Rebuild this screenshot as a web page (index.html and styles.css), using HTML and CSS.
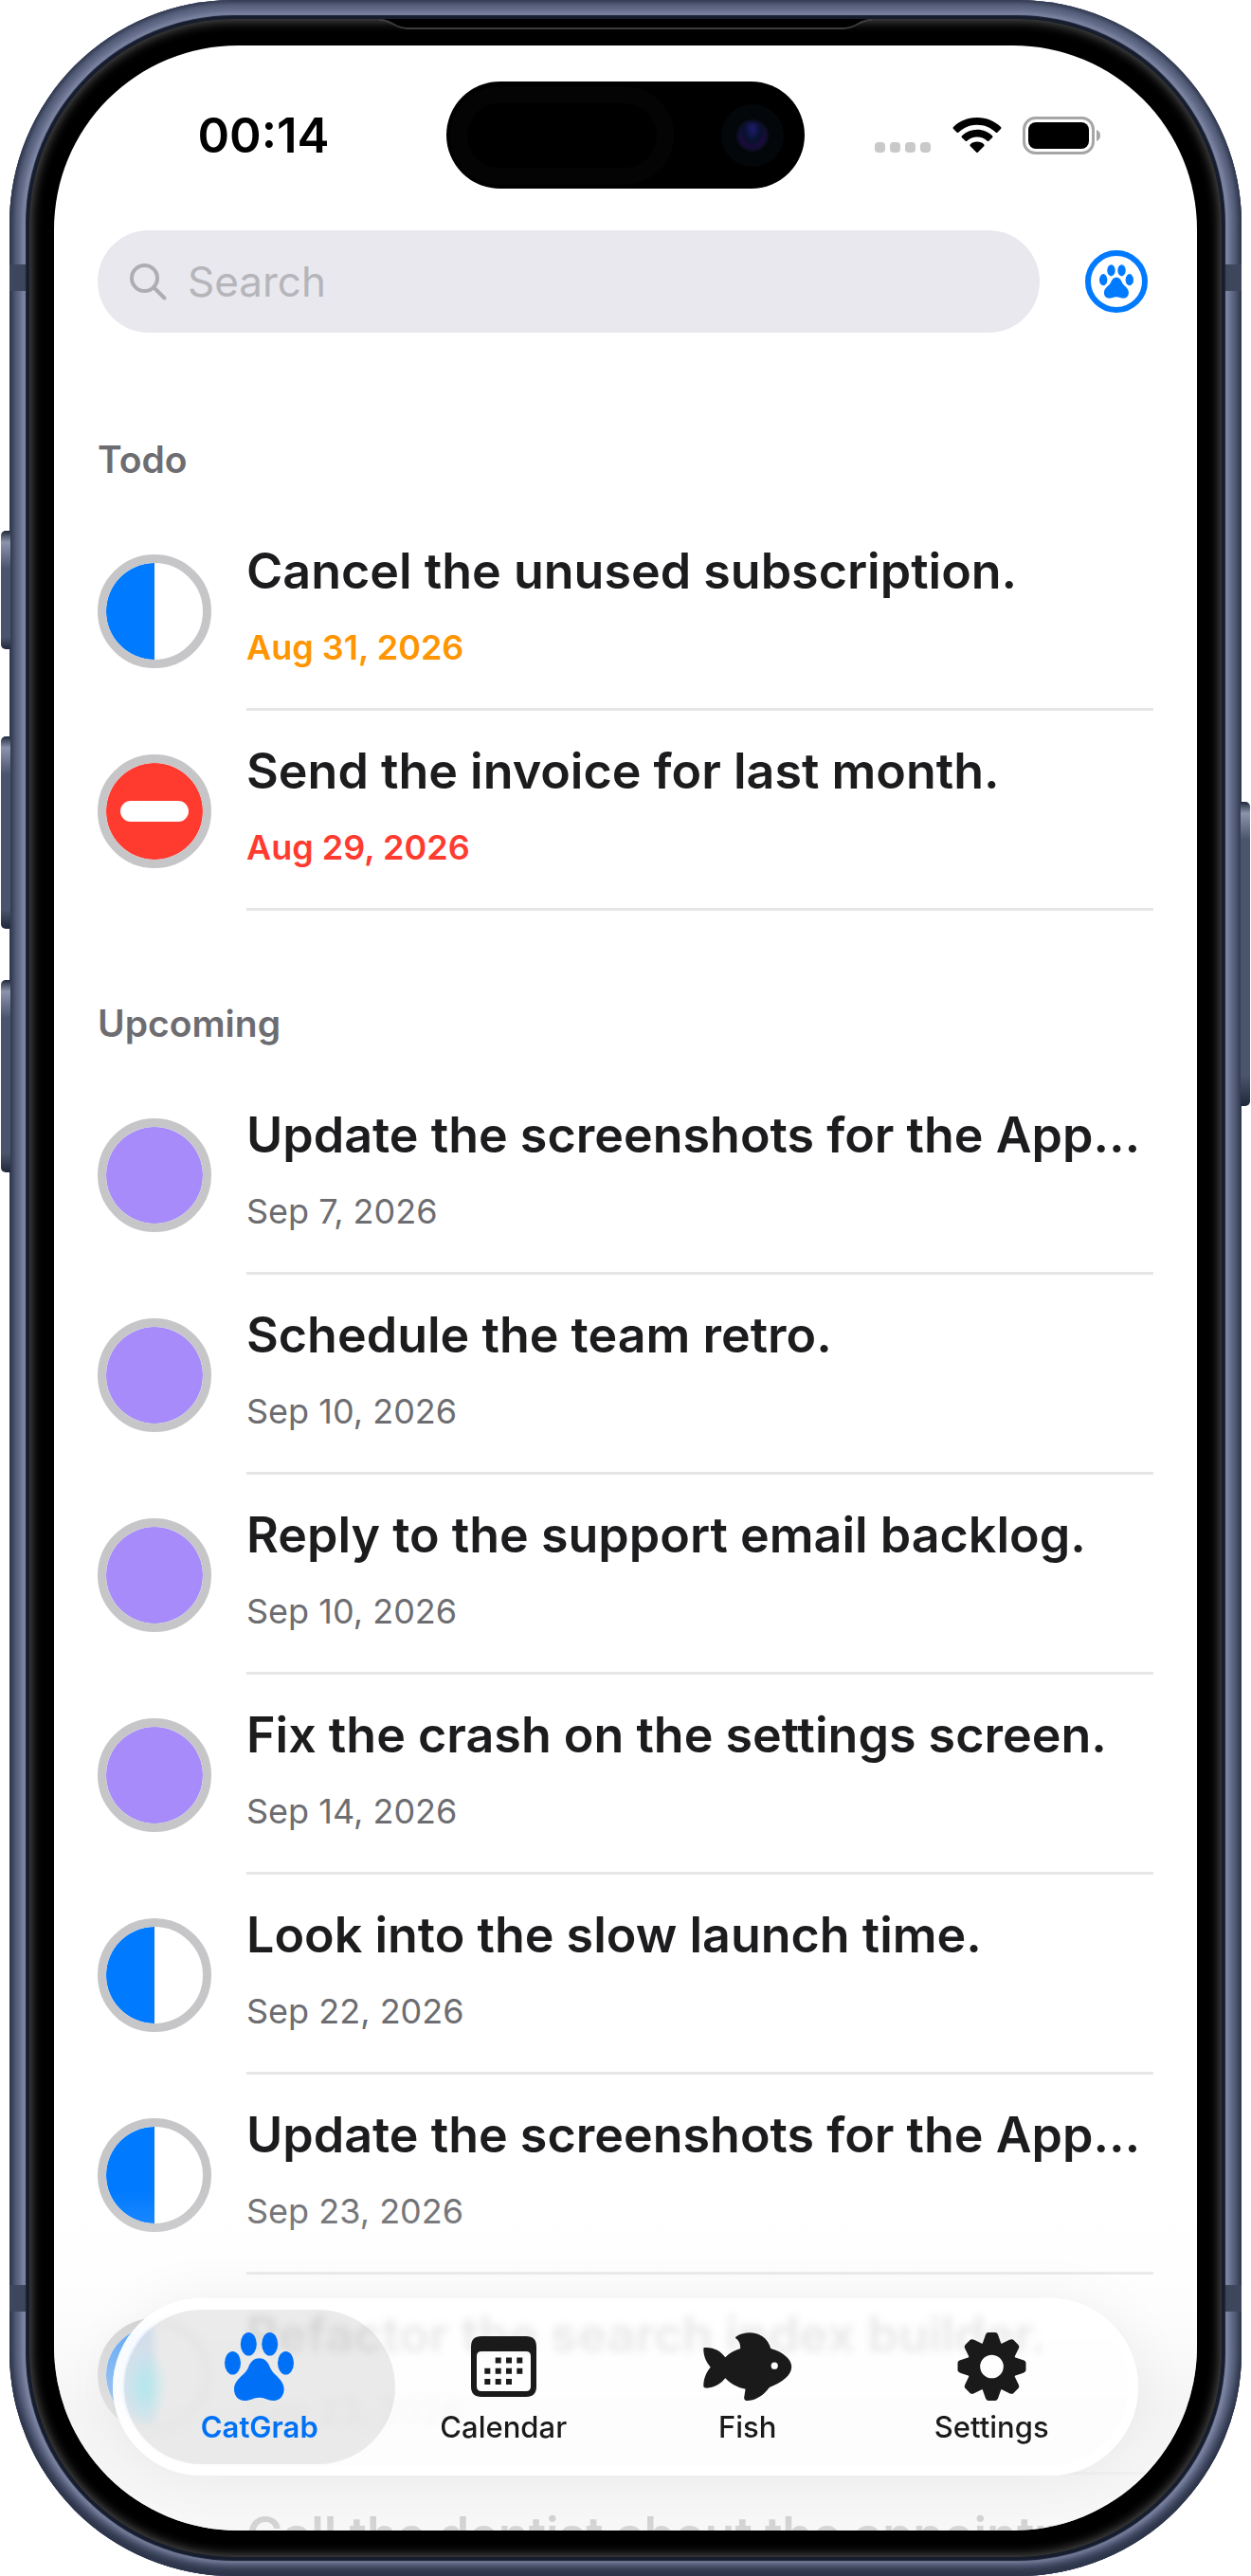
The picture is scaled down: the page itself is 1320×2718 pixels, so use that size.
FILE: index.html
```html
<!DOCTYPE html>
<html lang="en">
<head>
  <meta charset="UTF-8">
  <meta name="viewport" content="width=device-width, initial-scale=1.0">
  <title>CatGrab</title>
  <link rel="stylesheet" href="styles.css">
</head>
<body>

  <!-- Shared shapes -->
  <svg class="defs" aria-hidden="true">
    <symbol id="paw" viewBox="0 0 73 72">
      <ellipse cx="8.5" cy="32.3" rx="8.5" ry="12.3"/>
      <ellipse cx="25.3" cy="12.3" rx="8.5" ry="12.3"/>
      <ellipse cx="47.7" cy="12.3" rx="8.5" ry="12.3"/>
      <ellipse cx="64.5" cy="32.3" rx="8.5" ry="12.3"/>
      <path d="M36.5 27.3C43 27.3 46 32 48 37C51 45 62.7 49 62.7 60C62.7 67 58 72 52 72C46 72 42 68.7 36.5 68.7C31 68.7 27 72 21 72C14.5 72 10 67 10 60C10 49 22 45 25 37C27 32 30 27.3 36.5 27.3Z"/>
    </symbol>
  </svg>

  <div class="phone">
    <span class="side-button action"></span>
    <span class="side-button volume-up"></span>
    <span class="side-button volume-down"></span>
    <span class="side-button power"></span>
    <span class="antenna top-left"></span>
    <span class="antenna top-right"></span>
    <span class="antenna bottom-left"></span>
    <span class="antenna bottom-right"></span>

    <div class="bezel">
      <svg class="earpiece" viewBox="0 0 520 12" aria-hidden="true">
        <path d="M0 0H520C506 0 504 9 490 9H30C16 9 14 0 0 0Z"/>
        <path class="edge" d="M0 1C14 1 16 10 30 10H490C504 10 506 1 520 1"/>
      </svg>

      <div class="screen">

        <!-- Status bar -->
        <div class="status-bar">
          <span class="time">00:14</span>
          <div class="island"><span class="sensor"></span><span class="camera"></span></div>
          <div class="status-icons">
            <svg width="60" height="40" viewBox="0 0 60 40" aria-hidden="true">
              <g fill="#c9c9c9">
                <rect x="0" y="27" width="11" height="11" rx="4"/>
                <rect x="16" y="27" width="11" height="11" rx="4"/>
                <rect x="32" y="27" width="11" height="11" rx="4"/>
                <rect x="48" y="27" width="11" height="11" rx="4"/>
              </g>
            </svg>
            <svg width="52" height="40" viewBox="0 0 52 40" aria-hidden="true">
              <path d="M26 1C36 1 45 5 51 11Q52 12 51 13L47.500 16.500Q46.500 17.500 45.500 16.500C40 11.500 33.500 8.800 26 8.800S12 11.500 6.500 16.500Q5.500 17.500 4.500 16.500L1 13Q0 12 1 11C7 5 16 1 26 1Z"/>
              <path d="M26 13.800C32.500 13.800 38 16.300 42 20.200Q43 21.200 42 22.200L38.500 25.500Q37.500 26.500 36.500 25.500C33.500 23 30 21.500 26 21.500S18.500 23 15.500 25.500Q14.500 26.500 13.500 25.500L10 22.200Q9 21.200 10 20.200C14 16.300 19.500 13.800 26 13.800Z"/>
              <path d="M26 26.500C29 26.500 31.500 27.500 33.200 29.200Q34.200 30.200 33.200 31.200L27 37.500Q26 38.500 25 37.500L18.800 31.200Q17.800 30.200 18.800 29.200C20.500 27.500 23 26.500 26 26.500Z"/>
            </svg>
            <svg width="84" height="40" viewBox="0 0 84 40" aria-hidden="true">
              <rect x="1.500" y="1.500" width="73" height="37" rx="12" fill="none" stroke="#a6a6a6" stroke-width="3"/>
              <rect x="6" y="6" width="64" height="28" rx="8"/>
              <path d="M78 14Q82 15.500 82 20T78 26Z" fill="#a6a6a6"/>
            </svg>
          </div>
        </div>

        <!-- Search -->
        <header class="search-row">
          <label class="search-bar">
            <svg width="39" height="39" viewBox="0 0 39 39" aria-hidden="true">
              <circle cx="15.500" cy="15.500" r="13.500"/>
              <path d="M25.500 25.500L36.500 36.500"/>
            </svg>
            <input type="search" placeholder="Search" aria-label="Search">
          </label>
          <button class="paw-button" aria-label="Cats">
            <svg width="36" height="36" aria-hidden="true"><use href="#paw"/></svg>
          </button>
        </header>

        <!-- Task list -->
        <main>
          <h2>Todo</h2>
          <ul class="tasks">
            <li class="task">
              <button class="state half" aria-label="In progress"></button>
              <div class="task-info">
                <div class="title">Cancel the unused subscription.</div>
                <div class="date soon">Aug 31, 2026</div>
              </div>
            </li>
            <li class="task">
              <button class="state blocked" aria-label="Blocked"></button>
              <div class="task-info">
                <div class="title">Send the invoice for last month.</div>
                <div class="date overdue">Aug 29, 2026</div>
              </div>
            </li>
          </ul>

          <h2>Upcoming</h2>
          <ul class="tasks">
            <li class="task">
              <button class="state open" aria-label="Open"></button>
              <div class="task-info">
                <div class="title">Update the screenshots for the App…</div>
                <div class="date">Sep 7, 2026</div>
              </div>
            </li>
            <li class="task">
              <button class="state open" aria-label="Open"></button>
              <div class="task-info">
                <div class="title">Schedule the team retro.</div>
                <div class="date">Sep 10, 2026</div>
              </div>
            </li>
            <li class="task">
              <button class="state open" aria-label="Open"></button>
              <div class="task-info">
                <div class="title">Reply to the support email backlog.</div>
                <div class="date">Sep 10, 2026</div>
              </div>
            </li>
            <li class="task">
              <button class="state open" aria-label="Open"></button>
              <div class="task-info">
                <div class="title">Fix the crash on the settings screen.</div>
                <div class="date">Sep 14, 2026</div>
              </div>
            </li>
            <li class="task">
              <button class="state half" aria-label="In progress"></button>
              <div class="task-info">
                <div class="title">Look into the slow launch time.</div>
                <div class="date">Sep 22, 2026</div>
              </div>
            </li>
            <li class="task">
              <button class="state half" aria-label="In progress"></button>
              <div class="task-info">
                <div class="title">Update the screenshots for the App…</div>
                <div class="date">Sep 23, 2026</div>
              </div>
            </li>
            <li class="task">
              <button class="state half" aria-label="In progress"></button>
              <div class="task-info">
                <div class="title">Refactor the search index builder.</div>
                <div class="date">Sep 23, 2026</div>
              </div>
            </li>
            <li class="task">
              <button class="state half" aria-label="In progress"></button>
              <div class="task-info">
                <div class="title">Call the dentist about the appointm…</div>
              </div>
            </li>
          </ul>
        </main>

        <div class="fade"></div>

        <!-- Tab bar -->
        <nav class="tab-bar" aria-label="Main">
          <a href="#" class="tab active">
            <svg width="73" height="72" aria-hidden="true"><use href="#paw"/></svg>
            CatGrab
          </a>
          <a href="#" class="tab">
            <svg width="69" height="72" viewBox="0 -4 69 72" aria-hidden="true">
              <path fill-rule="evenodd" d="M11 0H58Q69 0 69 11V53Q69 64 58 64H11Q0 64 0 53V11Q0 0 11 0ZM11 16Q6 16 6 21V53Q6 58 11 58H58Q63 58 63 53V21Q63 16 58 16Z"/>
              <path class="dots" d="M28.700 25.500h.01M40 25.500h.01M51.300 25.500h.01M17.300 36.700h.01M28.700 36.700h.01M40 36.700h.01M51.300 36.700h.01M17.300 48h.01M28.700 48h.01M40 48h.01"/>
            </svg>
            Calendar
          </a>
          <a href="#" class="tab">
            <svg width="96" height="74" viewBox="0 0 96 74" aria-hidden="true">
              <path fill-rule="evenodd" d="M1 16.500C10 15.500 19 20 23.600 27C28 22.500 33 19.500 40 17.500C40 11.500 38 8.500 35 6.500Q34 5 36 4C48-3 68-1 73 17.500C86 21 95.500 29 95.500 37.300C95.500 46 86 54 71.500 59.500C65 68 58 73 48 74Q44 74.500 44 71L45.500 61.500C37 60 30 56 23.600 49.700C19 56 10 61 2 60.200Q0 60 0 58C0 50 3 43 7.600 37.700C3 32 0 26 0 18Q0 16.500 1 16.500ZM77 32.500A3.700 3.700 0 1 0 77 39.900A3.700 3.700 0 1 0 77 32.500Z"/>
            </svg>
            Fish
          </a>
          <a href="#" class="tab">
            <svg width="73" height="72" viewBox="-36.500 -36.500 73 73" aria-hidden="true">
              <path id="tooth" d="M-11.500-20L-7-33Q-6-36.500-3.500-36.500H3.500Q6-36.500 7-33L11.500-20Z"/>
              <use href="#tooth" transform="rotate(45)"/>
              <use href="#tooth" transform="rotate(90)"/>
              <use href="#tooth" transform="rotate(135)"/>
              <use href="#tooth" transform="rotate(180)"/>
              <use href="#tooth" transform="rotate(225)"/>
              <use href="#tooth" transform="rotate(270)"/>
              <use href="#tooth" transform="rotate(315)"/>
              <circle class="gear-ring" r="19.500"/>
            </svg>
            Settings
          </a>
        </nav>

      </div>
    </div>
  </div>

</body>
</html>
```

FILE: styles.css
```css
:root {
  --blue: #007aff;
  --red: #ff3b30;
  --orange: #ff9500;
  --purple: #a78bfa;
  --text: #1c1c1e;
  --muted: #6d6d71;
  --ring: #c6c6c8;
  --line: #e6e6e7;
}

*, *::before, *::after {
  margin: 0; padding: 0; box-sizing: border-box;
}
body {
  font-family: Inter, "Liberation Sans", sans-serif;
  color: var(--text);
  background: #fff;
}
a {
  color: inherit;
  text-decoration: none;
}
button, input {
  font: inherit;
  border: none;
  background: none;
}
ul {
  list-style: none;
}
.defs {
  position: absolute;
  width: 0; height: 0;
}

/* Phone body */
.phone {
  position: relative;
  height: 100vh;
  margin: 0 10px;
  padding: 20px 21px;
  border-radius: 236px;
  background: #8b93b0;
  box-shadow: inset 0 0 4px 2px #2e364b, inset 0 -8px 10px 2px #2e364b, inset 0 0 8px 9px #525b76, inset 0 0 6px 14px #6d7694;
}
.bezel {
  position: relative;
  height: 100%;
  padding: 28px 26px;
  border-radius: 216px;
  background: #000;
  box-shadow: 0 0 1px 4px #161d2f, inset 0 0 12px 2px #555;
}
.earpiece {
  position: absolute;
  top: 0;
  left: 50%;
  width: 520px;
  height: 12px;
  margin-left: -260px;
}
.earpiece .edge {
  fill: none;
  stroke: #3c3c3c;
  stroke-width: 2;
}
.side-button {
  position: absolute;
  width: 10px;
  background: linear-gradient(#20283a, #8b94ac 12px, #4a546c 40px, #4a546c 90%, #20283a);
}
.action, .volume-up, .volume-down {
  left: -9px;
  border-radius: 5px 0 0 5px;
}
.power {
  right: -9px;
  top: 846px;
  height: 321px;
  border-radius: 0 5px 5px 0;
}
.action { top: 560px; height: 125px; }
.volume-up { top: 777px; height: 203px; }
.volume-down { top: 1034px; height: 203px; }
.antenna {
  position: absolute;
  width: 17px;
  height: 28px;
  background: #3d465c;
}
.top-left, .top-right { top: 279px; }
.bottom-left, .bottom-right { bottom: 279px; }
.top-left, .bottom-left { left: 0; }
.top-right, .bottom-right { right: 0; }

.screen {
  position: relative;
  height: 100%;
  overflow: hidden;
  border-radius: 194px;
  background: #fff;
}

/* Status bar */
.status-bar {
  display: grid;
  grid-template-columns: 1fr 378px 1fr;
  align-items: center;
  padding-top: 38px;
}
.time {
  padding-left: 28px;
  font-size: 51px;
  line-height: 60px;
  font-weight: 600;
  color: #000;
  text-align: center;
}
.island {
  display: flex;
  align-items: center;
  justify-content: space-between;
  height: 113px;
  padding: 0 38px 0 22px;
  border-radius: 57px;
  background: #000;
}
.sensor {
  width: 200px;
  height: 68px;
  border-radius: 34px;
  box-shadow: 0 0 0 18px #040404;
}
.camera {
  width: 34px;
  height: 34px;
  border: 3px solid #0c0f24;
  border-radius: 50%;
  background: radial-gradient(ellipse at 50% 25%, #1d1c6b, #08112c 45%, #2b0648 90%);
  box-shadow: 0 0 0 16px #03070a;
}
.status-icons {
  display: flex;
  align-items: center;
  gap: 22px;
  padding-left: 74px;
}

/* Search */
.search-row {
  display: flex;
  align-items: center;
  gap: 48px;
  padding: 44px 52px 15px 46px;
}
.search-bar {
  flex: 1;
  display: flex;
  align-items: center;
  gap: 22px;
  height: 108px;
  padding: 0 34px;
  border-radius: 54px;
  background: #e9e8ee;
}
.search-bar svg {
  fill: none;
  stroke: #aeaeb2;
  stroke-width: 4;
  stroke-linecap: round;
}
.search-bar input {
  flex: 1;
  font-size: 44px;
  line-height: 54px;
  outline: none;
}
.search-bar input::placeholder {
  color: #b5b5ba;
}
.paw-button {
  display: flex;
  align-items: center;
  justify-content: center;
  width: 66px;
  height: 66px;
  border: 6px solid var(--blue);
  border-radius: 50%;
  fill: var(--blue);
}

/* Tasks */
h2 {
  height: 173px;
  padding: 95px 46px 0;
  font-size: 39px;
  line-height: 48px;
  font-weight: 600;
  color: var(--muted);
}
.task {
  display: flex;
  align-items: center;
  gap: 37px;
  height: 211px;
  padding: 0 46px;
}
.state {
  flex: none;
  width: 120px;
  height: 120px;
  border: 9px solid var(--ring);
  border-radius: 50%;
  background-clip: padding-box;
}
.half {
  background-image: linear-gradient(90deg, var(--blue) 50%, #fff 50%);
}
.open {
  background-color: var(--purple);
}
.blocked {
  display: flex;
  align-items: center;
  justify-content: center;
  background-color: var(--red);
}
.blocked::before {
  content: "";
  width: 72px;
  height: 22px;
  border-radius: 11px;
  background: #fff;
}
.task-info {
  flex: 1;
  min-width: 0;
  height: 100%;
  padding-top: 32px;
  border-bottom: 3px solid var(--line);
}
.title {
  overflow: hidden;
  white-space: nowrap;
  text-overflow: ellipsis;
  font-size: 52px;
  line-height: 64px;
  font-weight: 600;
}
.date {
  margin-top: 26px;
  font-size: 36px;
  line-height: 44px;
  color: var(--muted);
}
.soon {
  font-weight: 600;
  color: var(--orange);
}
.overdue {
  font-weight: 600;
  color: var(--red);
}

/* Tab bar */
.fade {
  position: absolute;
  left: 0; right: 0; bottom: 0;
  height: 360px;
  background: linear-gradient(rgba(252,252,252,0), rgba(250,250,250,.35) 35%, rgba(240,240,240,.7) 65%, rgba(246,246,246,.85));
}
.tab-bar {
  position: absolute;
  left: 62px; right: 62px;
  bottom: 58px;
  display: flex;
  height: 187px;
  padding: 12px 26px;
  border-radius: 94px;
  background: rgba(255,255,255,.82);
  backdrop-filter: blur(4px);
  box-shadow: 0 0 60px rgba(0,0,0,.06), inset 0 0 0 10px rgba(255,255,255,.7);
}
.tab {
  position: relative;
  flex: 1;
  display: flex;
  flex-direction: column;
  align-items: center;
  gap: 10px;
  padding-top: 24px;
  font-size: 31px;
  line-height: 36px;
  font-weight: 500;
  fill: #1a1a1a;
  color: #1a1a1a;
}
.tab svg {
  flex: none;
  height: 72px;
}
.tab.active {
  font-weight: 600;
  color: #0071f6;
  fill: #0071f6;
}
.tab.active::before {
  content: "";
  position: absolute;
  top: 0; bottom: 0;
  left: -14px; right: -14px;
  z-index: -1;
  border-radius: 82px;
  background: radial-gradient(ellipse 24px 42px at 22px 50%, rgba(170,232,238,.8), rgba(170,232,238,0)), rgba(0,0,0,.08);
}
.dots {
  stroke: #1a1a1a;
  stroke-width: 6;
  stroke-linecap: square;
}
.gear-ring {
  fill: none;
  stroke: #1a1a1a;
  stroke-width: 14;
}
```
